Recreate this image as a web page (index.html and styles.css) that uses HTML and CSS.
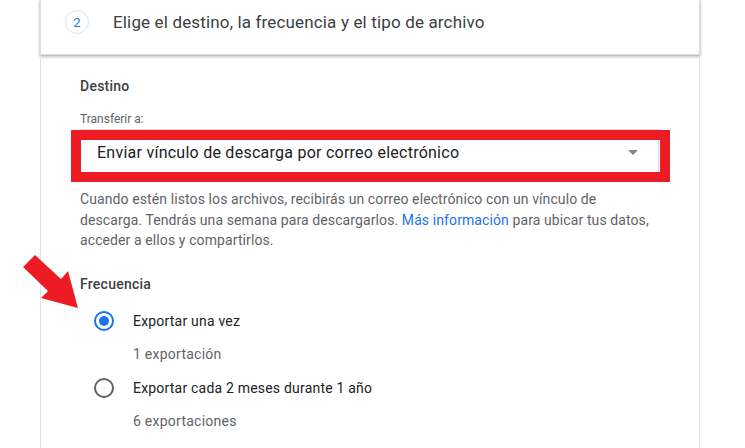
FILE: index.html
```html
<!DOCTYPE html>
<html lang="es">
<head>
  <meta charset="UTF-8" />
  <title>Exportar datos</title>
  <link rel="stylesheet" href="styles.css">
</head>
<body>
  <div class="wrapper">
    <div class="step-card">
      <span class="step-num">2</span>
      <h2 class="step-title">Elige el destino, la frecuencia y el tipo de archivo</h2>
    </div>

    <div class="panel">
      <h3 class="section-title">Destino</h3>
      <div class="field-label">Transferir a:</div>
      <div class="select-field">
        <span class="select-value">Enviar vínculo de descarga por correo electrónico</span>
        <span class="select-arrow"></span>
        <div class="highlight-box"></div>
      </div>
      <p class="help">Cuando estén listos los archivos, recibirás un correo electrónico con un vínculo de descarga. Tendrás una semana para descargarlos. <a href="#">Más información</a> para ubicar tus datos, acceder a ellos y compartirlos.</p>

      <h3 class="section-title freq">Frecuencia</h3>
      <div class="options">
        <div class="option">
          <div class="option-row">
            <span class="radio checked"></span>
            <span class="option-label">Exportar una vez</span>
          </div>
          <div class="option-sub">1 exportación</div>
        </div>
        <div class="option">
          <div class="option-row">
            <span class="radio"></span>
            <span class="option-label">Exportar cada 2 meses durante 1 año</span>
          </div>
          <div class="option-sub">6 exportaciones</div>
        </div>
      </div>
    </div>
  </div>

  <svg class="pointer-arrow" width="90" height="320" viewBox="0 0 90 320">
    <polygon points="35,255 61,279 68,271 78,308 41,298 48,291 23,267" fill="#ed1c24" />
  </svg>
</body>
</html>
```

FILE: styles.css
```css
body {
  margin: 0;
  background: #ffffff;
  font-family: Roboto, 'Liberation Sans', sans-serif;
  color: #3c4043;
  overflow: hidden;
}

.wrapper {
  margin-left: 40px;
  width: 660px;
}

.step-card {
  height: 55px;
  display: flex;
  align-items: center;
  padding: 0 0 10px 24px;
  border: 1px solid #dadce0;
  border-top: none;
  box-sizing: border-box;
  box-shadow: 0 1px 2px 0 rgba(60, 64, 67, 0.3), 0 1px 3px 1px rgba(60, 64, 67, 0.15);
  background: #fff;
}

.step-num {
  width: 22px;
  height: 22px;
  border: 1px solid #d2e3fc;
  border-radius: 50%;
  display: flex;
  align-items: center;
  justify-content: center;
  font-size: 13px;
  color: #1a73e8;
}

.step-title {
  margin: 0 0 0 24px;
  font-size: 17px;
  font-weight: 400;
  color: #3c4043;
  letter-spacing: 0.15px;
}

.panel {
  margin-top: 2px;
  border: 1px solid #e0e2e5;
  border-bottom: none;
  padding: 18px 40px 40px 39px;
  height: 500px;
}

.section-title {
  margin: 0;
  font-size: 14px;
  line-height: 20px;
  font-weight: 500;
  color: #3c4043;
  letter-spacing: 0.25px;
}

.field-label {
  margin-top: 15px;
  font-size: 12px;
  line-height: 16px;
  color: #5f6368;
}

.select-field {
  position: relative;
  margin-top: 2px;
  height: 46px;
  border: 1px solid #dadce0;
  box-sizing: border-box;
  display: flex;
  align-items: center;
  padding: 0 20px 0 16px;
}

.select-value {
  flex: 1;
  font-size: 16px;
  color: #202124;
  letter-spacing: 0.25px;
}

.select-arrow {
  width: 0;
  height: 0;
  border-left: 5px solid transparent;
  border-right: 5px solid transparent;
  border-top: 5px solid #80868b;
}

.highlight-box {
  position: absolute;
  left: -10px;
  top: 0;
  width: 599px;
  height: 52px;
  border: 10px solid #ed1c24;
  box-sizing: border-box;
}

.help {
  margin: 14px 0 0;
  font-size: 14px;
  line-height: 20.5px;
  color: #5f6368;
  letter-spacing: 0.1px;
}

.help a {
  color: #1a73e8;
  text-decoration: none;
}

.freq {
  margin-top: 23px;
}

.options {
  margin-top: 9px;
}

.option {
  margin-bottom: 6px;
}

.option-row {
  height: 36px;
  display: flex;
  align-items: center;
  padding-left: 14px;
}

.radio {
  width: 20px;
  height: 20px;
  border: 2px solid #5f6368;
  border-radius: 50%;
  box-sizing: border-box;
  display: flex;
  align-items: center;
  justify-content: center;
}

.radio.checked {
  border-color: #1a73e8;
}

.radio.checked::after {
  content: "";
  width: 10px;
  height: 10px;
  border-radius: 50%;
  background: #1a73e8;
}

.option-label {
  margin-left: 19px;
  font-size: 14px;
  color: #202124;
  letter-spacing: 0.2px;
}

.option-sub {
  margin-top: 5px;
  padding-left: 53px;
  font-size: 14px;
  line-height: 20px;
  color: #5f6368;
  letter-spacing: 0.25px;
}

.pointer-arrow {
  position: absolute;
  left: 0;
  top: 0;
}
```
